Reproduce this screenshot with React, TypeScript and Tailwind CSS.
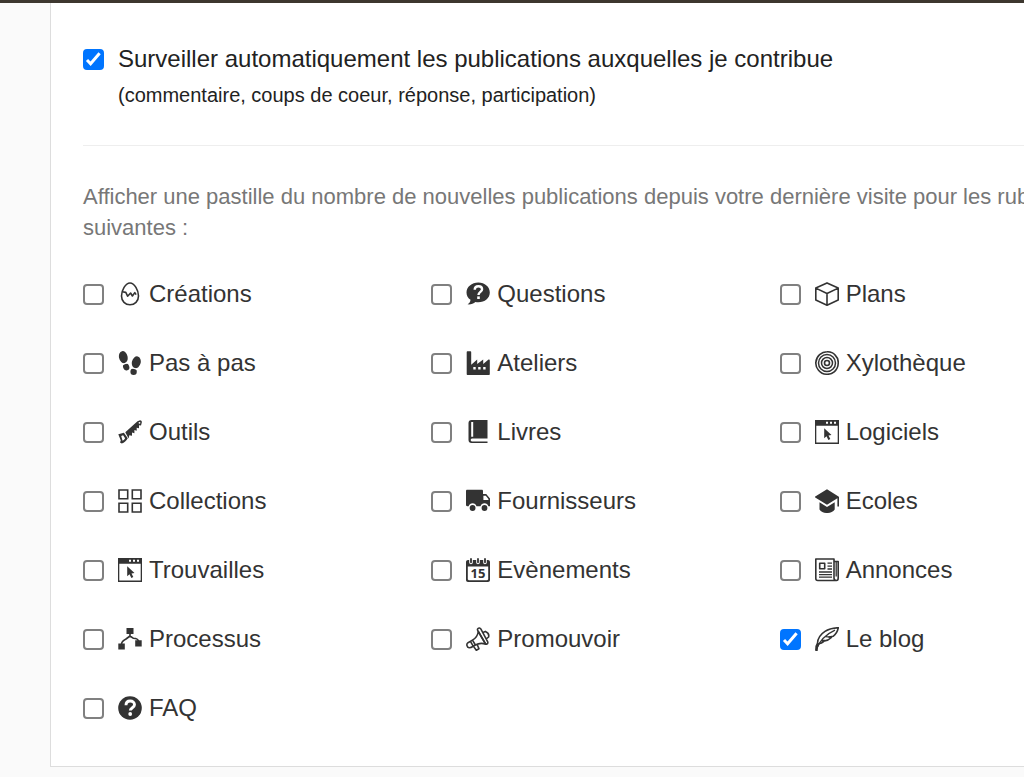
import { useState, type ReactNode } from 'react'

interface Section {
  id: string
  label: string
  icon: ReactNode
  checked?: boolean
}

function Icon({ children }: { children: ReactNode }) {
  return (
    <svg viewBox="0 0 24 24" className="size-6 shrink-0" fill="currentColor" aria-hidden="true">
      {children}
    </svg>
  )
}

const line = { fill: 'none', stroke: 'currentColor', strokeWidth: 1.6, strokeLinejoin: 'round' as const }

const windowIcon = (
  <Icon>
    <path fillRule="evenodd" d="M0 0h24v24H0zM1.300 5.800v16.600h21.400V5.800zM11 1.800v2h2v-2zM15 1.800v2h2v-2zM19 1.800v2h2v-2z" />
    <path d="M9.200 8.200v10l2.300-2 1.900 3.800 1.900-.9-1.800-3.700 3-.3z" />
  </Icon>
)

const sections: Section[] = [
  {
    id: 'creations',
    label: 'Créations',
    icon: (
      <Icon>
        <path d="M12 1C7.500 1 3.500 8.500 3.500 14c0 5.200 3.800 8.800 8.500 8.800s8.500-3.600 8.500-8.800C20.500 8.500 16.500 1 12 1z" {...line} />
        <path d="M4.200 9.800l3.600.6 1.800 3.800 3-3.200 1.800 3 2.400-3.400 1.300 2" {...line} />
      </Icon>
    ),
  },
  {
    id: 'questions',
    label: 'Questions',
    icon: (
      <Icon>
        <path d="M12.300.4C5.800.4.5 4.800.5 10.400c0 3.100 1.500 5.600 4 7.300-.1 2-1.200 3.500-3 4.600 3 .4 6-.7 7.900-2.400 1 .2 2 .3 2.900.3 6.500 0 11.500-4.200 11.500-9.800S18.800.4 12.300.4z" />
        <path d="M8.700 7.700c0-2.300 1.600-3.500 3.700-3.500s3.700 1.200 3.700 3.100c0 2.600-3.600 2.600-3.600 5.600" fill="none" stroke="#fff" strokeWidth="2.400" />
        <path d="M11.200 14.400h2.600v2.600h-2.600z" fill="#fff" />
      </Icon>
    ),
  },
  {
    id: 'plans',
    label: 'Plans',
    icon: (
      <Icon>
        <path d="M12 .9l11.200 5.200v12L12 23.200.8 18.100v-12zM.8 6.100L12 11.500l11.200-5.400M12 11.500v11.700" {...line} />
      </Icon>
    ),
  },
  {
    id: 'pas',
    label: 'Pas à pas',
    icon: (
      <Icon>
        <ellipse cx="5.300" cy="6.200" rx="4.300" ry="6.200" transform="rotate(-12 5.300 6.200)" />
        <ellipse cx="8.200" cy="16" rx="3.100" ry="3.500" transform="rotate(-20 8.200 16)" />
        <ellipse cx="18.300" cy="11.300" rx="4.400" ry="6" transform="rotate(14 18.300 11.300)" />
        <ellipse cx="15.600" cy="20.700" rx="3.200" ry="3.200" />
        <path d="M3.500 13.700l8-2.600M12.500 16.300l7.500 2.400" stroke="#fff" strokeWidth="1.200" />
      </Icon>
    ),
  },
  {
    id: 'ateliers',
    label: 'Ateliers',
    icon: (
      <Icon>
        <path fillRule="evenodd" d="M.7 23V1.200c0-.6.4-1 1-1h2.500c.6 0 1 .4 1 1v12.500l6-5.200v4.500l6-4.500v4.500l5-4.200c.8-.6 1.600-.2 1.600.8V23c0 .6-.4 1-1 1H1.700c-.6 0-1-.4-1-1zM7.300 16v2.400h2.400V16zM12.200 16v2.400h2.400V16zM17.200 16v2.400h2.400V16z" />
      </Icon>
    ),
  },
  {
    id: 'xylotheque',
    label: 'Xylothèque',
    icon: (
      <Icon>
        <path d="M12 .8c3.600-.1 6.200 1 8 3.100 2.400 2.400 3.500 5.300 3.200 8.600-.1 3.500-1.700 6.400-4 8.300-2.300 1.900-4.900 2.700-7.900 2.400-3.300-.1-5.900-1.700-7.800-4C1.400 16.900.6 14.200.9 11.200c.2-3.200 1.600-5.700 3.700-7.600C6.700 1.800 9.100.8 12 .8z" {...line} />
        <circle cx="12" cy="12" r="8.500" {...line} strokeWidth={1.500} />
        <circle cx="12" cy="12" r="5.500" {...line} strokeWidth={1.500} />
        <circle cx="12" cy="12" r="2.500" {...line} />
      </Icon>
    ),
  },
  {
    id: 'outils',
    label: 'Outils',
    icon: (
      <Icon>
        <path fillRule="evenodd" d="M7.300 12.200L19.500 1.300l2-.9c1.300-.5 2.600.6 2.300 2l-.8 3.200-2-.3v3l-2.300-.6v3.100l-2.300-.7v3.200l-2.400-.7v3.200l-2.700-.6-.7 3.300zM21.500 1.900a.9.900 0 1 0 0 1.800.9.900 0 0 0 0-1.800z" />
        <path fillRule="evenodd" d="M.3 14.300l5.600-1.500 3.900 5.400c-1.500 2.500-3.400 4.200-6 5.400l-1.800-1 .8-2zM3.200 16l1.400 4.700c1.100-.6 2-1.400 2.500-2.500l-2-2.900z" />
      </Icon>
    ),
  },
  {
    id: 'livres',
    label: 'Livres',
    icon: (
      <Icon>
        <path fillRule="evenodd" d="M5.500 0H21.500v18.500H6c-1.700 0-1.700 3 0 3h15.500V23H5.500C3.700 23 2.500 21.700 2.500 20V3c0-1.800 1.200-3 3-3zM5.200 2v14.700h2V2z" />
      </Icon>
    ),
  },
  { id: 'logiciels', label: 'Logiciels', icon: windowIcon },
  {
    id: 'collections',
    label: 'Collections',
    icon: (
      <Icon>
        <path d="M1 1h8.700v8.700H1zM14.300 1H23v8.700h-8.700zM1 14.300h8.700V23H1zM14.300 14.300H23V23h-8.700z" {...line} strokeLinejoin="miter" />
      </Icon>
    ),
  },
  {
    id: 'fournisseurs',
    label: 'Fournisseurs',
    icon: (
      <Icon>
        <path fillRule="evenodd" d="M1.200.8h14.600c.7 0 1.200.5 1.200 1.200v3h3.200L24 9.600v7.600h-1.600c-.6-2-2-3-3.900-3s-3.400 1-4 3H10.500c-.6-2-2-3-3.900-3s-3.400 1-4 3H1.200C.5 17.200 0 16.700 0 16V2C0 1.300.5.8 1.200.8zM17.400 6.700v4.400h5V9.900l-2.600-3.200z" />
        <circle cx="6.600" cy="19" r="2.900" />
        <circle cx="18.500" cy="19" r="2.900" />
      </Icon>
    ),
  },
  {
    id: 'ecoles',
    label: 'Ecoles',
    icon: (
      <Icon>
        <path d="M12 .2l11.500 7.200c.3.200.5.500.5.800v9.300h-1.600V9.200L12 15.800.2 8.400c-.3-.3-.3-.7 0-.9z" />
        <path d="M4.500 13.200l7.500 4.700 7.700-4.700v7.300c-3.200 4.700-12.200 4.700-15.200 0z" />
      </Icon>
    ),
  },
  { id: 'trouvailles', label: 'Trouvailles', icon: windowIcon },
  {
    id: 'evenements',
    label: 'Evènements',
    icon: (
      <Icon>
        <path fillRule="evenodd" d="M2 2h20c1.100 0 2 .9 2 2V22c0 1.100-.9 2-2 2H2c-1.100 0-2-.9-2-2V4c0-1.100.9-2 2-2zM1.800 8.600v12.500c0 .6.500 1.100 1.100 1.100h18.200c.6 0 1.100-.5 1.100-1.100V8.600z" />
        <path d="M5 1.200v3.300M12 1.200v3.300M19 1.200v3.300" fill="none" stroke="#fff" strokeWidth="3.600" strokeLinecap="round" />
        <path d="M5 1v3.300M12 1v3.300M19 1v3.300" fill="none" stroke="currentColor" strokeWidth="1.800" strokeLinecap="round" />
        <text x="12" y="20" textAnchor="middle" fontSize="13" fontWeight="700" fontFamily="Open Sans, sans-serif">
          15
        </text>
      </Icon>
    ),
  },
  {
    id: 'annonces',
    label: 'Annonces',
    icon: (
      <Icon>
        <path d="M19 1H.8v19.500c0 1.200.8 2 2 2h18.700c-1.500 0-2.500-1-2.500-2.500zM19 3.500h4.200V20c0 1.600-.6 2.500-1.700 2.500" {...line} />
        <path d="M21.200 4v14.500M12.500 5.200H17M12.500 8.200H17M12.500 11H17M4 14h13M4 16.600h13M4 19.200h13" {...line} strokeWidth={1.300} />
        <path d="M4.700 5.200h5v5.500h-5z" {...line} />
      </Icon>
    ),
  },
  {
    id: 'processus',
    label: 'Processus',
    icon: (
      <Icon>
        <path d="M8.500 1h7v6h-7zM.3 16.500h6.500v6H.3zM17.200 13.300h6.500v6.200h-6.500z" />
        <path d="M12 6.500v2.500L8 12c-2.600 1.200-4.200 2.500-4.500 5M12 9l3.500 2.300c2.600 0 4.500.9 5 3" {...line} />
      </Icon>
    ),
  },
  {
    id: 'promouvoir',
    label: 'Promouvoir',
    icon: (
      <Icon>
        <path d="M12.300 4.500c-.5 4.200-2.600 6.700-5.800 8.600l2.900 4.900c3.200-1.800 6.400-2.200 10.300-.8z" {...line} />
        <path d="M12 1.500c.9-.9 2.100-.7 2.800.4l6.800 12.700c.5 1.100.2 2.100-.6 2.400-.8.300-1.500-.1-2-1L11.800 3.600c-.5-.8-.4-1.500.2-2.100zM16.700 5.600l2.700-1.200c2.500 1 3.800 3.200 3.200 5.600l-2.400 2M6.500 13.100l-4.500 2.600c-2 1.300-1.100 4.700 1.100 5.100 1.300.3 4-1.500 6.300-2.800M4.400 14.400l2.800 4.800M7.500 19.400l2.800 3.800 2.700-1.400-1.900-4.400" {...line} />
      </Icon>
    ),
  },
  {
    id: 'blog',
    label: 'Le blog',
    checked: true,
    icon: (
      <Icon>
        <path d="M1 23.300c-.2-3 .2-5 1.500-7 .2-4.500 3-9 7.500-11.900C13.800 2 18 1 23.300.7c-.6 3.300-2.200 6.500-5.200 8.600l-3.900.7 2.200.5c-2.100 2.100-4.400 3.200-7 3.500l-2.200-.4 1.300 1c-1.200 1.200-2.700 1.900-4.600 2.200-1.500 1.900-2 3.900-1.900 6.500z" {...line} />
        <path d="M1 23.300C4.500 13.500 11.500 7 20 3.200M10.700 9.700l4.500.3M7.300 13.300l3 .2" {...line} strokeWidth={1.300} />
      </Icon>
    ),
  },
  {
    id: 'faq',
    label: 'FAQ',
    icon: (
      <Icon>
        <circle cx="12" cy="12" r="11.800" />
        <path d="M8 9.200C8 6.600 9.700 5 12.200 5s4.300 1.500 4.300 3.800c0 3-4.200 2.900-4.200 5.800" fill="none" stroke="#fff" strokeWidth="2.900" />
        <circle cx="12.200" cy="18" r="1.900" fill="#fff" />
      </Icon>
    ),
  },
]

interface CheckboxProps {
  id: string
  checked: boolean
  onChange: () => void
}

function Checkbox({ id, checked, onChange }: CheckboxProps) {
  return (
    <span className="grid shrink-0">
      <input
        id={id}
        type="checkbox"
        checked={checked}
        onChange={onChange}
        className="peer col-start-1 row-start-1 size-[21px] appearance-none rounded-[4px] border-2 border-[#808080] bg-white checked:border-[#0075ff] checked:bg-[#0075ff]"
      />
      <svg
        viewBox="0 0 21 21"
        className="pointer-events-none invisible col-start-1 row-start-1 size-[21px] peer-checked:visible"
        aria-hidden="true"
      >
        <path d="M4 11l3.600 3.700 9-10.500" fill="none" stroke="#fff" strokeWidth="3" />
      </svg>
    </span>
  )
}

export default function App() {
  const [watch, setWatch] = useState(true)
  const [selected, setSelected] = useState<string[]>(sections.filter((s) => s.checked).map((s) => s.id))

  const toggle = (id: string) => {
    setSelected((prev) => (prev.includes(id) ? prev.filter((s) => s !== id) : [...prev, id]))
  }

  return (
    <div className="min-h-screen overflow-x-hidden bg-[#fafafa] font-['Liberation_Sans',Arial,sans-serif] text-[#333]">
      <header className="h-[3px] bg-[#3d372f]" />

      <main className="ml-[50px] min-w-[1110px] border-b border-l border-[#ddd] bg-white px-8 pt-[38px] pb-10">
        {/* Automatic watch */}
        <div className="flex gap-[14px]">
          <div className="flex h-9 items-center">
            <Checkbox id="watch" checked={watch} onChange={() => setWatch(!watch)} />
          </div>
          <label htmlFor="watch" className="text-2xl leading-9 text-[#222]">
            Surveiller automatiquement les publications auxquelles je contribue
            <small className="block text-xl leading-9">(commentaire, coups de coeur, réponse, participation)</small>
          </label>
        </div>

        <hr className="mt-8 border-[#eee]" />

        {/* Sections with a badge */}
        <p className="mt-[35px] text-[22px] leading-[31px] text-[#777]">
          Afficher une pastille du nombre de nouvelles publications depuis votre dernière visite pour les rubriques
          suivantes :
        </p>

        <div className="mt-[33px] grid grid-cols-3 gap-y-[33px]">
          {sections.map((section) => (
            <div key={section.id} className="flex h-9 items-center gap-[14px]">
              <Checkbox
                id={section.id}
                checked={selected.includes(section.id)}
                onChange={() => toggle(section.id)}
              />
              <label htmlFor={section.id} className="flex items-center gap-[7px] text-2xl leading-9">
                {section.icon}
                {section.label}
              </label>
            </div>
          ))}
        </div>
      </main>
    </div>
  )
}
